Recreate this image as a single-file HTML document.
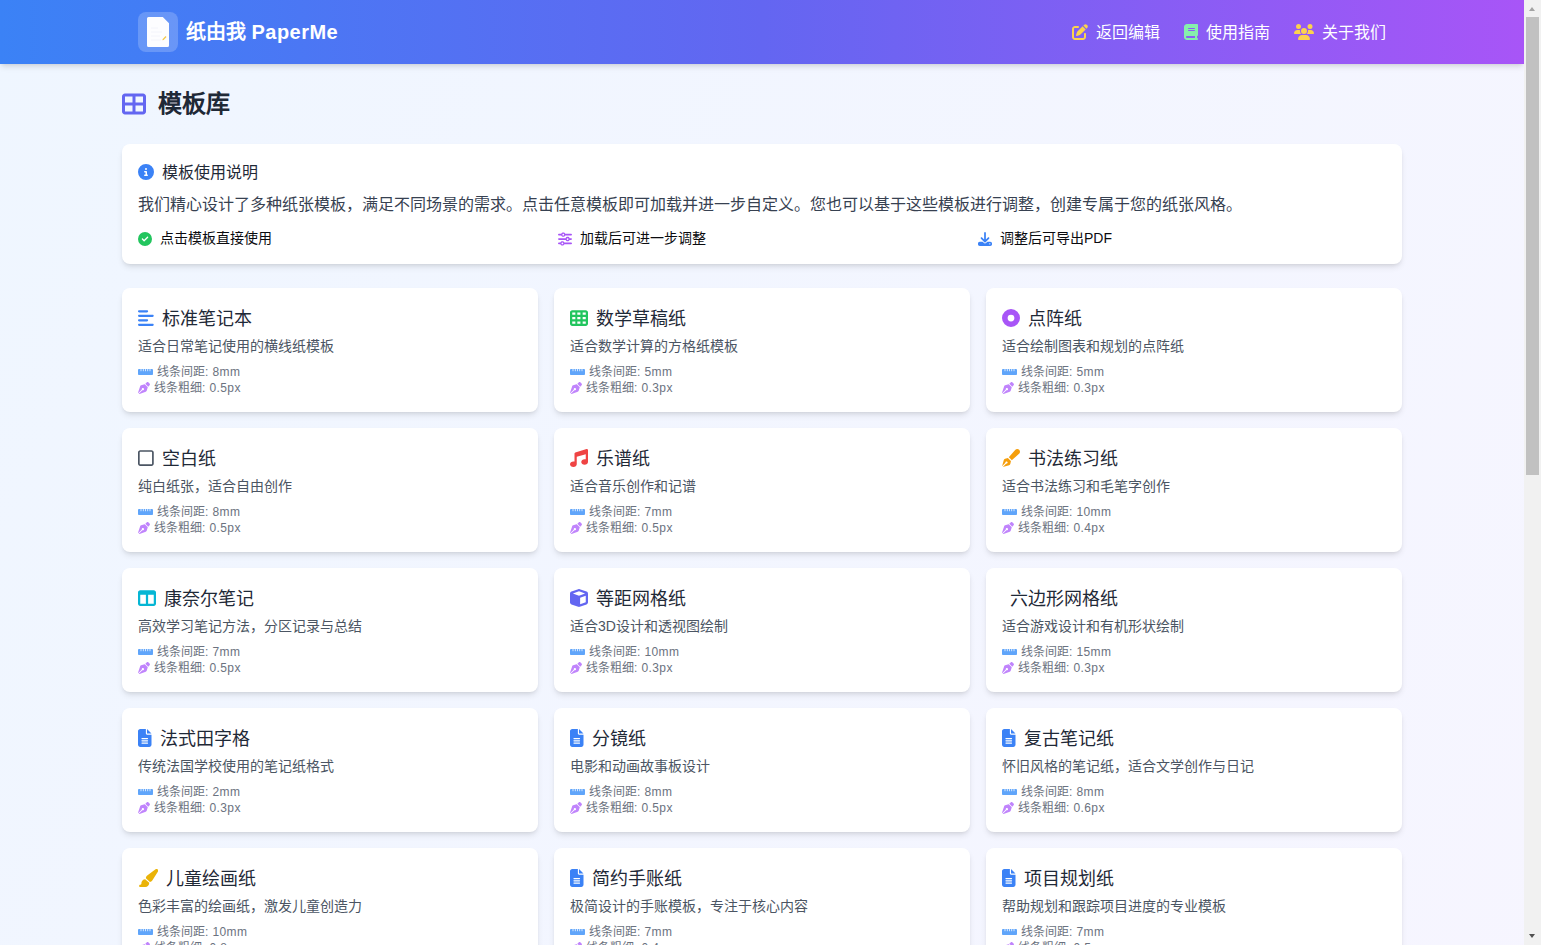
<!DOCTYPE html>
<html lang="zh-CN">
<head>
<meta charset="utf-8">
<title>模板库 - 纸由我 PaperMe</title>
<style>
*{box-sizing:border-box;margin:0;padding:0}
html,body{width:1541px;height:945px;overflow:hidden}
body{font-family:"Liberation Sans",sans-serif;color:#1f2937;position:relative;
background:#f5f5ff linear-gradient(to bottom right,#eff6ff,#faf5ff) 0 0/1524px 3000px no-repeat;}
svg{display:block;flex:none}
/* header */
#hdr{position:absolute;left:0;top:0;width:1524px;height:64px;
background:linear-gradient(90deg,#3b82f6 0%,#6366f1 50%,#a855f7 100%);
box-shadow:0 4px 6px -1px rgba(0,0,0,.1),0 2px 4px -2px rgba(0,0,0,.1);z-index:5}
#hdr .in{width:1280px;margin:0 auto;height:64px;padding:0 16px;display:flex;align-items:center;justify-content:space-between}
.brand{display:flex;align-items:center}
.logo{width:40px;height:40px;border-radius:8px;background:rgba(255,255,255,.2);display:flex;align-items:center;justify-content:center;margin-right:8px}
.brand b{font-size:20px;line-height:28px;color:#fff;font-weight:700}
.brand b span{letter-spacing:.45px}
.nav{display:flex;align-items:center}
.nav a{display:flex;align-items:center;color:#fff;font-size:16px;line-height:24px;margin-left:24px;text-decoration:none}
.nav a svg{margin-right:8px}
.nav a span{position:relative;top:1px}
/* main */
#main{position:absolute;left:122px;top:88px;width:1280px}
h1{display:flex;align-items:center;font-size:24px;line-height:32px;font-weight:700;color:#1f2937;margin-bottom:24px}
h1 svg{margin-right:12px}
.info{background:#fff;border-radius:8px;padding:16px;height:120px;margin-bottom:24px;
box-shadow:0 4px 6px -1px rgba(0,0,0,.1),0 2px 4px -2px rgba(0,0,0,.1)}
.info h2{display:flex;align-items:center;font-size:16px;line-height:24px;font-weight:400;color:#1f2937;margin-bottom:8px}
.info h2 svg{margin-right:8px}
.info h2 span{position:relative;top:1px}
.info p{font-size:16px;line-height:24px;color:#374151;position:relative;top:1px}
.tips{display:grid;grid-template-columns:repeat(3,408px);column-gap:12px;margin-top:12px}
.tips div{display:flex;align-items:center;font-size:14px;line-height:20px;color:#0b0b0f}
.tips svg{margin-right:8px;position:relative;top:.5px}
.grid{display:grid;grid-template-columns:repeat(3,416px);gap:16px}
.card{background:#fff;border-radius:8px;padding:16px;height:124px;
box-shadow:0 4px 6px -1px rgba(0,0,0,.1),0 2px 4px -2px rgba(0,0,0,.1)}
.card h3{display:flex;align-items:center;font-size:18px;line-height:28px;font-weight:400;color:#1f2937;margin-bottom:4px}
.card h3 svg{margin-right:8px}
.card h3 i{display:block;width:0;margin-right:8px}
.card h3 span{position:relative;top:1px}
.card p{font-size:14px;line-height:20px;color:#4b5563}
.sp{margin-top:8px;font-size:12px;line-height:16px;color:#6b7280}
.sp div{display:flex;align-items:center;height:16px}
.sp svg{margin-right:4px}
.sp span{letter-spacing:.4px}
/* scrollbar */
#sb{position:absolute;left:1524px;top:0;width:17px;height:945px;background:#f1f1f1;z-index:9}
#sb .th{position:absolute;left:2px;top:17px;width:13px;height:458px;background:#c1c1c1}
#sb .up{position:absolute;left:5px;top:7px;width:0;height:0;border-left:3.5px solid transparent;border-right:3.5px solid transparent;border-bottom:4px solid #a3a3a3}
#sb .dn{position:absolute;left:5px;top:934px;width:0;height:0;border-left:3.5px solid transparent;border-right:3.5px solid transparent;border-top:4px solid #505050}
</style>
</head>
<body>
<div id="hdr"><div class="in">
  <div class="brand"><div class="logo"><svg width="40" height="40" viewBox="0 0 40 40"><path d="M10.500 5h14.300l6.200 6.200V33.500a1.500 1.500 0 0 1-1.500 1.500h-19a1.500 1.500 0 0 1-1.500-1.500v-27A1.500 1.500 0 0 1 10.500 5z" fill="#fdfdff"/><path d="M13 16h7M13 20h11M13 24h9M13 28h10" stroke="#f3f4fb" stroke-width="1" fill="none"/><path d="M24.700 27l2.900-2.900.9.900-2.900 2.900-1.200.3z" fill="#f2c94c"/></svg></div><b>纸由我 <span>PaperMe</span></b></div>
  <div class="nav">
    <a><svg width="16.0" height="16" viewBox="0 0 512 512" fill="#fcd34d"><path d="M471.600 21.700c-21.900-21.900-57.300-21.900-79.200 0L362.300 51.700l97.900 97.900 30.100-30.100c21.900-21.900 21.900-57.300 0-79.200L471.600 21.700zm-299.200 220c-6.100 6.100-10.800 13.600-13.500 21.900l-29.600 88.800c-2.900 8.600-.6 18.100 5.800 24.600s15.900 8.700 24.600 5.800l88.800-29.600c8.200-2.700 15.700-7.400 21.900-13.500L437.700 172.300 339.700 74.300 172.400 241.700zM96 64C43 64 0 107 0 160V416c0 53 43 96 96 96H352c53 0 96-43 96-96V320c0-17.700-14.300-32-32-32s-32 14.300-32 32v96c0 17.700-14.300 32-32 32H96c-17.700 0-32-14.300-32-32V160c0-17.700 14.300-32 32-32h96c17.700 0 32-14.300 32-32s-14.300-32-32-32H96z"/></svg><span>返回编辑</span></a>
    <a><svg width="14.0" height="16" viewBox="0 0 448 512" fill="#86efac"><path d="M96 0C43 0 0 43 0 96V416c0 53 43 96 96 96H384h32c17.700 0 32-14.300 32-32s-14.300-32-32-32V384c17.700 0 32-14.300 32-32V32c0-17.700-14.300-32-32-32H384 96zm0 384H352v64H96c-17.700 0-32-14.300-32-32s14.300-32 32-32zm32-240c0-8.800 7.200-16 16-16H336c8.800 0 16 7.200 16 16s-7.200 16-16 16H144c-8.800 0-16-7.200-16-16zm16 48H336c8.800 0 16 7.200 16 16s-7.200 16-16 16H144c-8.800 0-16-7.200-16-16s7.200-16 16-16z"/></svg><span>使用指南</span></a>
    <a><svg width="20.0" height="16" viewBox="0 0 640 512" fill="#fcd34d"><path d="M144 0a80 80 0 1 1 0 160A80 80 0 1 1 144 0zM512 0a80 80 0 1 1 0 160A80 80 0 1 1 512 0zM0 298.700C0 239.800 47.800 192 106.700 192h42.700c15.900 0 31 3.500 44.600 9.700c-1.300 7.200-1.900 14.700-1.900 22.300c0 38.200 16.800 72.500 43.300 96c-.2 0-.4 0-.7 0H21.300C9.600 320 0 310.400 0 298.700zM405.300 320c-.2 0-.4 0-.7 0c26.600-23.500 43.300-57.800 43.300-96c0-7.600-.7-15-1.900-22.300c13.600-6.300 28.700-9.700 44.600-9.700h42.700C592.200 192 640 239.800 640 298.700c0 11.800-9.600 21.300-21.300 21.300H405.300zM224 224a96 96 0 1 1 192 0 96 96 0 1 1 -192 0zM128 485.300C128 411.700 187.700 352 261.300 352H378.700C452.300 352 512 411.700 512 485.300c0 14.700-11.900 26.700-26.700 26.700H154.700c-14.700 0-26.700-11.900-26.700-26.700z"/></svg><span>关于我们</span></a>
  </div>
</div></div>

<div id="main">
  <h1><svg width="24.0" height="24" viewBox="0 0 512 512" fill="#6366f1"><path d="M448 96V224H288V96H448zm0 192V416H288V288H448zM224 224H64V96H224V224zM64 288H224V416H64V288zM64 32C28.700 32 0 60.700 0 96V416c0 35.300 28.700 64 64 64H448c35.300 0 64-28.700 64-64V96c0-35.300-28.700-64-64-64H64z"/></svg>模板库</h1>
  <div class="info">
    <h2><svg width="16.0" height="16" viewBox="0 0 512 512" fill="#3b82f6"><path d="M256 512A256 256 0 1 0 256 0a256 256 0 1 0 0 512zM216 336h24V272H216c-13.300 0-24-10.700-24-24s10.700-24 24-24h48c13.300 0 24 10.700 24 24v88h8c13.300 0 24 10.700 24 24s-10.700 24-24 24H216c-13.300 0-24-10.700-24-24s10.700-24 24-24zm40-208a32 32 0 1 1 0 64 32 32 0 1 1 0-64z"/></svg><span>模板使用说明</span></h2>
    <p>我们精心设计了多种纸张模板，满足不同场景的需求。点击任意模板即可加载并进一步自定义。您也可以基于这些模板进行调整，创建专属于您的纸张风格。</p>
    <div class="tips">
      <div><svg width="14.0" height="14" viewBox="0 0 512 512" fill="#22c55e"><path d="M256 512A256 256 0 1 0 256 0a256 256 0 1 0 0 512zM369 209L241 337c-9.400 9.400-24.600 9.400-33.900 0l-64-64c-9.400-9.400-9.400-24.600 0-33.900s24.600-9.400 33.900 0l47 47L335 175c9.400-9.400 24.600-9.400 33.900 0s9.400 24.600 0 33.900z"/></svg>点击模板直接使用</div>
      <div><svg width="14.0" height="14" viewBox="0 0 512 512" fill="#a855f7"><path d="M0 416c0 17.700 14.300 32 32 32l54.700 0c12.300 28.300 40.500 48 73.300 48s61-19.700 73.300-48L480 448c17.700 0 32-14.300 32-32s-14.300-32-32-32l-246.700 0c-12.300-28.300-40.500-48-73.300-48s-61 19.700-73.300 48L32 384c-17.700 0-32 14.300-32 32zm128 0a32 32 0 1 1 64 0 32 32 0 1 1 -64 0zM320 256a32 32 0 1 1 64 0 32 32 0 1 1 -64 0zm32-80c-32.800 0-61 19.700-73.300 48L32 224c-17.700 0-32 14.300-32 32s14.300 32 32 32l246.700 0c12.300 28.300 40.500 48 73.300 48s61-19.700 73.300-48l54.700 0c17.700 0 32-14.300 32-32s-14.300-32-32-32l-54.700 0c-12.300-28.300-40.500-48-73.300-48zM192 128a32 32 0 1 1 0-64 32 32 0 1 1 0 64zm73.300-64C253 35.700 224.800 16 192 16s-61 19.700-73.300 48L32 64C14.300 64 0 78.300 0 96s14.300 32 32 32l86.700 0c12.300 28.300 40.500 48 73.300 48s61-19.700 73.300-48L480 128c17.700 0 32-14.300 32-32s-14.300-32-32-32L265.300 64z"/></svg>加载后可进一步调整</div>
      <div><svg width="14.0" height="14" viewBox="0 0 512 512" fill="#3b82f6"><path d="M288 32c0-17.700-14.300-32-32-32s-32 14.300-32 32V274.700l-73.400-73.400c-12.500-12.500-32.800-12.500-45.300 0s-12.500 32.800 0 45.300l128 128c12.500 12.500 32.800 12.500 45.300 0l128-128c12.500-12.500 12.500-32.800 0-45.300s-32.800-12.500-45.300 0L288 274.700V32zM64 352c-35.300 0-64 28.700-64 64v32c0 35.300 28.700 64 64 64H448c35.300 0 64-28.700 64-64V416c0-35.300-28.700-64-64-64H346.500l-45.300 45.300c-25 25-65.500 25-90.500 0L165.500 352H64zm368 56a24 24 0 1 1 0 48 24 24 0 1 1 0-48z"/></svg>调整后可导出PDF</div>
    </div>
  </div>
  <div class="grid">
<div class="card"><h3><svg width="15.75" height="18" viewBox="0 0 448 512" fill="#3b82f6"><path d="M288 64c0 17.700-14.300 32-32 32H32C14.300 96 0 81.700 0 64S14.300 32 32 32H256c17.700 0 32 14.300 32 32zm0 256c0 17.700-14.300 32-32 32H32c-17.700 0-32-14.300-32-32s14.300-32 32-32H256c17.700 0 32 14.300 32 32zM0 192c0-17.700 14.300-32 32-32H416c17.700 0 32 14.300 32 32s-14.300 32-32 32H32c-17.700 0-32-14.300-32-32zM448 448c0 17.700-14.300 32-32 32H32c-17.700 0-32-14.300-32-32s14.300-32 32-32H416c17.700 0 32 14.300 32 32z"/></svg><span>标准笔记本</span></h3><p>适合日常笔记使用的横线纸模板</p><div class="sp"><div><svg width="15.0" height="12" viewBox="0 0 640 512" fill="#60a5fa"><path d="M0 336c0 26.500 21.500 48 48 48l544 0c26.500 0 48-21.500 48-48l0-160c0-26.500-21.500-48-48-48l-64 0 0 80c0 8.800-7.200 16-16 16s-16-7.200-16-16l0-80-64 0 0 80c0 8.800-7.200 16-16 16s-16-7.200-16-16l0-80-64 0 0 80c0 8.800-7.200 16-16 16s-16-7.200-16-16l0-80-64 0 0 80c0 8.800-7.200 16-16 16s-16-7.200-16-16l0-80-64 0 0 80c0 8.800-7.200 16-16 16s-16-7.200-16-16l0-80-64 0c-26.500 0-48 21.500-48 48L0 336z"/></svg>线条间距<span>: 8mm</span></div><div><svg width="12.0" height="12" viewBox="0 0 512 512" fill="#c084fc"><path d="M368.400 18.300L312.700 74.100 437.900 199.300l55.700-55.700c21.900-21.900 21.900-57.300 0-79.200L447.600 18.300c-21.900-21.900-57.300-21.900-79.200 0zM288 94.600l-9.200 2.800L134.700 140.600c-19.900 6-35.700 21.200-42.300 41L3.800 445.800c-3.800 11.300-1 23.900 7.300 32.400L164.700 324.700c-3-6.300-4.700-13.300-4.700-20.700c0-26.500 21.500-48 48-48s48 21.500 48 48s-21.500 48-48 48c-7.400 0-14.400-1.700-20.700-4.700L33.700 500.900c8.600 8.300 21.100 11.200 32.400 7.300l264.300-88.600c19.700-6.600 35-22.400 41-42.300l43.200-144.100 2.800-9.200L288 94.600z"/></svg>线条粗细<span>: 0.5px</span></div></div></div>
<div class="card"><h3><svg width="18.0" height="18" viewBox="0 0 512 512" fill="#22c55e"><path d="M64 32C28.700 32 0 60.700 0 96V416c0 35.300 28.700 64 64 64H448c35.300 0 64-28.700 64-64V96c0-35.300-28.700-64-64-64H64zm88 64v64H64V96h88zm56 0h88v64H208V96zm240 0v64H360V96h88zM64 224h88v64H64V224zm232 0v64H208V224h88zm64 0h88v64H360V224zM152 352v64H64V352h88zm56 0h88v64H208V352zm240 0v64H360V352h88z"/></svg><span>数学草稿纸</span></h3><p>适合数学计算的方格纸模板</p><div class="sp"><div><svg width="15.0" height="12" viewBox="0 0 640 512" fill="#60a5fa"><path d="M0 336c0 26.500 21.500 48 48 48l544 0c26.500 0 48-21.500 48-48l0-160c0-26.500-21.500-48-48-48l-64 0 0 80c0 8.800-7.200 16-16 16s-16-7.200-16-16l0-80-64 0 0 80c0 8.800-7.200 16-16 16s-16-7.200-16-16l0-80-64 0 0 80c0 8.800-7.200 16-16 16s-16-7.200-16-16l0-80-64 0 0 80c0 8.800-7.200 16-16 16s-16-7.200-16-16l0-80-64 0 0 80c0 8.800-7.200 16-16 16s-16-7.200-16-16l0-80-64 0c-26.500 0-48 21.500-48 48L0 336z"/></svg>线条间距<span>: 5mm</span></div><div><svg width="12.0" height="12" viewBox="0 0 512 512" fill="#c084fc"><path d="M368.400 18.300L312.700 74.100 437.900 199.300l55.700-55.700c21.900-21.900 21.900-57.300 0-79.200L447.600 18.300c-21.900-21.900-57.300-21.900-79.200 0zM288 94.600l-9.200 2.800L134.700 140.600c-19.900 6-35.700 21.200-42.300 41L3.800 445.800c-3.800 11.300-1 23.900 7.300 32.400L164.700 324.700c-3-6.300-4.700-13.300-4.700-20.700c0-26.500 21.500-48 48-48s48 21.500 48 48s-21.500 48-48 48c-7.400 0-14.400-1.700-20.700-4.700L33.700 500.900c8.600 8.300 21.100 11.200 32.400 7.300l264.300-88.600c19.700-6.600 35-22.400 41-42.300l43.200-144.100 2.800-9.200L288 94.600z"/></svg>线条粗细<span>: 0.3px</span></div></div></div>
<div class="card"><h3><svg width="18.0" height="18" viewBox="0 0 512 512" fill="#a855f7"><path d="M256 512A256 256 0 1 0 256 0a256 256 0 1 0 0 512zm0-352a96 96 0 1 1 0 192 96 96 0 1 1 0-192z"/></svg><span>点阵纸</span></h3><p>适合绘制图表和规划的点阵纸</p><div class="sp"><div><svg width="15.0" height="12" viewBox="0 0 640 512" fill="#60a5fa"><path d="M0 336c0 26.500 21.500 48 48 48l544 0c26.500 0 48-21.500 48-48l0-160c0-26.500-21.500-48-48-48l-64 0 0 80c0 8.800-7.200 16-16 16s-16-7.200-16-16l0-80-64 0 0 80c0 8.800-7.200 16-16 16s-16-7.200-16-16l0-80-64 0 0 80c0 8.800-7.200 16-16 16s-16-7.200-16-16l0-80-64 0 0 80c0 8.800-7.200 16-16 16s-16-7.200-16-16l0-80-64 0 0 80c0 8.800-7.200 16-16 16s-16-7.200-16-16l0-80-64 0c-26.500 0-48 21.500-48 48L0 336z"/></svg>线条间距<span>: 5mm</span></div><div><svg width="12.0" height="12" viewBox="0 0 512 512" fill="#c084fc"><path d="M368.400 18.300L312.700 74.100 437.900 199.300l55.700-55.700c21.900-21.900 21.900-57.300 0-79.200L447.600 18.300c-21.900-21.900-57.300-21.900-79.200 0zM288 94.600l-9.200 2.800L134.700 140.600c-19.900 6-35.700 21.200-42.300 41L3.800 445.800c-3.800 11.300-1 23.900 7.300 32.400L164.700 324.700c-3-6.300-4.700-13.300-4.700-20.700c0-26.500 21.500-48 48-48s48 21.500 48 48s-21.500 48-48 48c-7.400 0-14.400-1.700-20.700-4.700L33.700 500.900c8.600 8.300 21.100 11.200 32.400 7.300l264.300-88.600c19.700-6.600 35-22.400 41-42.300l43.200-144.100 2.800-9.200L288 94.600z"/></svg>线条粗细<span>: 0.3px</span></div></div></div>
<div class="card"><h3><svg width="15.75" height="18" viewBox="0 0 448 512" fill="#4b5563"><path d="M384 80c8.800 0 16 7.200 16 16V416c0 8.800-7.200 16-16 16H64c-8.800 0-16-7.200-16-16V96c0-8.800 7.200-16 16-16H384zM64 32C28.700 32 0 60.700 0 96V416c0 35.300 28.700 64 64 64H384c35.300 0 64-28.700 64-64V96c0-35.300-28.700-64-64-64H64z"/></svg><span>空白纸</span></h3><p>纯白纸张，适合自由创作</p><div class="sp"><div><svg width="15.0" height="12" viewBox="0 0 640 512" fill="#60a5fa"><path d="M0 336c0 26.500 21.500 48 48 48l544 0c26.500 0 48-21.500 48-48l0-160c0-26.500-21.500-48-48-48l-64 0 0 80c0 8.800-7.200 16-16 16s-16-7.200-16-16l0-80-64 0 0 80c0 8.800-7.200 16-16 16s-16-7.200-16-16l0-80-64 0 0 80c0 8.800-7.200 16-16 16s-16-7.200-16-16l0-80-64 0 0 80c0 8.800-7.200 16-16 16s-16-7.200-16-16l0-80-64 0 0 80c0 8.800-7.200 16-16 16s-16-7.200-16-16l0-80-64 0c-26.500 0-48 21.500-48 48L0 336z"/></svg>线条间距<span>: 8mm</span></div><div><svg width="12.0" height="12" viewBox="0 0 512 512" fill="#c084fc"><path d="M368.400 18.300L312.700 74.100 437.900 199.300l55.700-55.700c21.900-21.900 21.900-57.300 0-79.200L447.600 18.300c-21.900-21.900-57.300-21.900-79.200 0zM288 94.600l-9.200 2.800L134.700 140.600c-19.900 6-35.700 21.200-42.300 41L3.800 445.800c-3.800 11.300-1 23.900 7.300 32.400L164.700 324.700c-3-6.300-4.700-13.300-4.700-20.700c0-26.500 21.500-48 48-48s48 21.500 48 48s-21.500 48-48 48c-7.400 0-14.400-1.700-20.700-4.700L33.700 500.900c8.600 8.300 21.100 11.200 32.400 7.300l264.300-88.600c19.700-6.600 35-22.400 41-42.300l43.200-144.100 2.800-9.200L288 94.600z"/></svg>线条粗细<span>: 0.5px</span></div></div></div>
<div class="card"><h3><svg width="18.0" height="18" viewBox="0 0 512 512" fill="#ef4444"><path d="M499.1 6.3c8.100 6 12.900 15.600 12.900 25.700v72V368c0 44.200-43 80-96 80s-96-35.800-96-80s43-80 96-80c11.200 0 22 1.600 32 4.500V147L192 223.800V432c0 44.200-43 80-96 80s-96-35.800-96-80s43-80 96-80c11.200 0 22 1.600 32 4.500V200 128c0-14.100 9.300-26.600 22.800-30.700l320-96c9.700-2.900 20.200-1.100 28.300 5z"/></svg><span>乐谱纸</span></h3><p>适合音乐创作和记谱</p><div class="sp"><div><svg width="15.0" height="12" viewBox="0 0 640 512" fill="#60a5fa"><path d="M0 336c0 26.500 21.500 48 48 48l544 0c26.500 0 48-21.500 48-48l0-160c0-26.500-21.500-48-48-48l-64 0 0 80c0 8.800-7.200 16-16 16s-16-7.200-16-16l0-80-64 0 0 80c0 8.800-7.200 16-16 16s-16-7.200-16-16l0-80-64 0 0 80c0 8.800-7.200 16-16 16s-16-7.200-16-16l0-80-64 0 0 80c0 8.800-7.200 16-16 16s-16-7.200-16-16l0-80-64 0 0 80c0 8.800-7.200 16-16 16s-16-7.200-16-16l0-80-64 0c-26.500 0-48 21.500-48 48L0 336z"/></svg>线条间距<span>: 7mm</span></div><div><svg width="12.0" height="12" viewBox="0 0 512 512" fill="#c084fc"><path d="M368.400 18.300L312.700 74.100 437.900 199.300l55.700-55.700c21.900-21.900 21.900-57.300 0-79.200L447.600 18.300c-21.900-21.900-57.300-21.900-79.200 0zM288 94.600l-9.200 2.800L134.700 140.600c-19.900 6-35.700 21.200-42.300 41L3.800 445.800c-3.800 11.300-1 23.900 7.300 32.400L164.700 324.700c-3-6.300-4.700-13.300-4.700-20.700c0-26.500 21.500-48 48-48s48 21.500 48 48s-21.500 48-48 48c-7.400 0-14.400-1.700-20.700-4.700L33.700 500.900c8.600 8.300 21.100 11.200 32.400 7.300l264.300-88.600c19.700-6.600 35-22.400 41-42.300l43.200-144.100 2.800-9.200L288 94.600z"/></svg>线条粗细<span>: 0.5px</span></div></div></div>
<div class="card"><h3><svg width="18.0" height="18" viewBox="0 0 512 512" fill="#f59e0b"><path d="M373.500 27.100C388.500 9.900 410.200 0 433 0c43.600 0 79 35.400 79 79c0 22.800-9.900 44.600-27.100 59.600L277.700 319l-10.300-10.300-64-64L193 234.300 373.500 27.100zM170.300 256.900l10.400 10.400 64 64 10.400 10.400-19.200 83.400c-3.900 17.100-16.900 30.700-33.800 35.400L24.400 510.300l95.400-95.400c2.600 .7 5.400 1.100 8.300 1.100c17.700 0 32-14.300 32-32s-14.300-32-32-32s-32 14.300-32 32c0 2.900 .4 5.600 1.100 8.300L1.700 487.600 51.500 310c4.700-16.900 18.300-29.900 35.400-33.800l83.400-19.200z"/></svg><span>书法练习纸</span></h3><p>适合书法练习和毛笔字创作</p><div class="sp"><div><svg width="15.0" height="12" viewBox="0 0 640 512" fill="#60a5fa"><path d="M0 336c0 26.500 21.500 48 48 48l544 0c26.500 0 48-21.500 48-48l0-160c0-26.500-21.500-48-48-48l-64 0 0 80c0 8.800-7.200 16-16 16s-16-7.200-16-16l0-80-64 0 0 80c0 8.800-7.200 16-16 16s-16-7.200-16-16l0-80-64 0 0 80c0 8.800-7.200 16-16 16s-16-7.200-16-16l0-80-64 0 0 80c0 8.800-7.200 16-16 16s-16-7.200-16-16l0-80-64 0 0 80c0 8.800-7.200 16-16 16s-16-7.200-16-16l0-80-64 0c-26.500 0-48 21.500-48 48L0 336z"/></svg>线条间距<span>: 10mm</span></div><div><svg width="12.0" height="12" viewBox="0 0 512 512" fill="#c084fc"><path d="M368.400 18.300L312.700 74.100 437.900 199.300l55.700-55.700c21.900-21.900 21.900-57.300 0-79.200L447.600 18.300c-21.900-21.900-57.300-21.900-79.200 0zM288 94.600l-9.200 2.800L134.700 140.600c-19.900 6-35.700 21.200-42.300 41L3.800 445.800c-3.800 11.300-1 23.900 7.300 32.400L164.700 324.700c-3-6.300-4.700-13.300-4.700-20.700c0-26.500 21.500-48 48-48s48 21.500 48 48s-21.500 48-48 48c-7.400 0-14.400-1.700-20.700-4.700L33.700 500.900c8.600 8.300 21.100 11.200 32.400 7.300l264.300-88.600c19.700-6.600 35-22.400 41-42.300l43.200-144.100 2.800-9.200L288 94.600z"/></svg>线条粗细<span>: 0.4px</span></div></div></div>
<div class="card"><h3><svg width="18.0" height="18" viewBox="0 0 512 512" fill="#06b6d4"><path d="M0 96C0 60.700 28.700 32 64 32H448c35.300 0 64 28.700 64 64V416c0 35.300-28.700 64-64 64H64c-35.300 0-64-28.700-64-64V96zm64 64V416H224V160H64zm384 0H288V416H448V160z"/></svg><span>康奈尔笔记</span></h3><p>高效学习笔记方法，分区记录与总结</p><div class="sp"><div><svg width="15.0" height="12" viewBox="0 0 640 512" fill="#60a5fa"><path d="M0 336c0 26.500 21.500 48 48 48l544 0c26.500 0 48-21.500 48-48l0-160c0-26.500-21.500-48-48-48l-64 0 0 80c0 8.800-7.200 16-16 16s-16-7.200-16-16l0-80-64 0 0 80c0 8.800-7.200 16-16 16s-16-7.200-16-16l0-80-64 0 0 80c0 8.800-7.200 16-16 16s-16-7.200-16-16l0-80-64 0 0 80c0 8.800-7.200 16-16 16s-16-7.200-16-16l0-80-64 0 0 80c0 8.800-7.200 16-16 16s-16-7.200-16-16l0-80-64 0c-26.500 0-48 21.500-48 48L0 336z"/></svg>线条间距<span>: 7mm</span></div><div><svg width="12.0" height="12" viewBox="0 0 512 512" fill="#c084fc"><path d="M368.400 18.300L312.700 74.100 437.900 199.300l55.700-55.700c21.900-21.900 21.900-57.300 0-79.200L447.600 18.300c-21.900-21.900-57.300-21.900-79.200 0zM288 94.600l-9.200 2.800L134.700 140.600c-19.900 6-35.700 21.200-42.300 41L3.800 445.800c-3.800 11.300-1 23.900 7.300 32.400L164.700 324.700c-3-6.300-4.700-13.300-4.700-20.700c0-26.500 21.500-48 48-48s48 21.500 48 48s-21.500 48-48 48c-7.400 0-14.400-1.700-20.700-4.700L33.700 500.900c8.600 8.300 21.100 11.200 32.400 7.300l264.300-88.600c19.700-6.600 35-22.400 41-42.300l43.200-144.100 2.800-9.200L288 94.600z"/></svg>线条粗细<span>: 0.5px</span></div></div></div>
<div class="card"><h3><svg width="18.0" height="18" viewBox="0 0 512 512" fill="#6366f1"><path d="M234.500 5.700c13.900-5 29.100-5 43.100 0l192 68.600C495 83.400 512 107.500 512 134.600V377.400c0 27-17 51.200-42.500 60.300l-192 68.600c-13.900 5-29.100 5-43.100 0l-192-68.600C17 428.600 0 404.500 0 377.400V134.600c0-27 17-51.200 42.500-60.300l192-68.600zM256 66L82.300 128 256 190l173.700-62L256 66zm32 368.600l160-57.100v-188L288 246.600v188z"/></svg><span>等距网格纸</span></h3><p>适合3D设计和透视图绘制</p><div class="sp"><div><svg width="15.0" height="12" viewBox="0 0 640 512" fill="#60a5fa"><path d="M0 336c0 26.500 21.500 48 48 48l544 0c26.500 0 48-21.500 48-48l0-160c0-26.500-21.500-48-48-48l-64 0 0 80c0 8.800-7.200 16-16 16s-16-7.200-16-16l0-80-64 0 0 80c0 8.800-7.200 16-16 16s-16-7.200-16-16l0-80-64 0 0 80c0 8.800-7.200 16-16 16s-16-7.200-16-16l0-80-64 0 0 80c0 8.800-7.200 16-16 16s-16-7.200-16-16l0-80-64 0 0 80c0 8.800-7.200 16-16 16s-16-7.200-16-16l0-80-64 0c-26.500 0-48 21.500-48 48L0 336z"/></svg>线条间距<span>: 10mm</span></div><div><svg width="12.0" height="12" viewBox="0 0 512 512" fill="#c084fc"><path d="M368.400 18.300L312.700 74.100 437.900 199.300l55.700-55.700c21.900-21.900 21.900-57.300 0-79.200L447.600 18.300c-21.900-21.900-57.300-21.900-79.200 0zM288 94.600l-9.200 2.800L134.700 140.600c-19.900 6-35.700 21.200-42.300 41L3.800 445.800c-3.800 11.300-1 23.900 7.300 32.400L164.700 324.700c-3-6.300-4.700-13.300-4.700-20.700c0-26.500 21.500-48 48-48s48 21.500 48 48s-21.500 48-48 48c-7.400 0-14.400-1.700-20.700-4.700L33.700 500.900c8.600 8.300 21.100 11.200 32.400 7.300l264.300-88.600c19.700-6.600 35-22.400 41-42.300l43.200-144.100 2.800-9.200L288 94.600z"/></svg>线条粗细<span>: 0.3px</span></div></div></div>
<div class="card"><h3><i></i><span>六边形网格纸</span></h3><p>适合游戏设计和有机形状绘制</p><div class="sp"><div><svg width="15.0" height="12" viewBox="0 0 640 512" fill="#60a5fa"><path d="M0 336c0 26.500 21.500 48 48 48l544 0c26.500 0 48-21.500 48-48l0-160c0-26.500-21.500-48-48-48l-64 0 0 80c0 8.800-7.200 16-16 16s-16-7.200-16-16l0-80-64 0 0 80c0 8.800-7.200 16-16 16s-16-7.200-16-16l0-80-64 0 0 80c0 8.800-7.200 16-16 16s-16-7.200-16-16l0-80-64 0 0 80c0 8.800-7.200 16-16 16s-16-7.200-16-16l0-80-64 0 0 80c0 8.800-7.200 16-16 16s-16-7.200-16-16l0-80-64 0c-26.500 0-48 21.500-48 48L0 336z"/></svg>线条间距<span>: 15mm</span></div><div><svg width="12.0" height="12" viewBox="0 0 512 512" fill="#c084fc"><path d="M368.400 18.300L312.700 74.100 437.900 199.300l55.700-55.700c21.900-21.900 21.900-57.300 0-79.200L447.600 18.300c-21.900-21.900-57.300-21.900-79.200 0zM288 94.600l-9.200 2.800L134.700 140.600c-19.900 6-35.700 21.200-42.300 41L3.800 445.800c-3.800 11.300-1 23.900 7.300 32.400L164.700 324.700c-3-6.300-4.700-13.300-4.700-20.700c0-26.500 21.500-48 48-48s48 21.500 48 48s-21.500 48-48 48c-7.400 0-14.400-1.700-20.700-4.700L33.700 500.900c8.600 8.300 21.100 11.200 32.400 7.300l264.300-88.600c19.700-6.600 35-22.400 41-42.300l43.200-144.100 2.800-9.200L288 94.600z"/></svg>线条粗细<span>: 0.3px</span></div></div></div>
<div class="card"><h3><svg width="13.5" height="18" viewBox="0 0 384 512" fill="#3b82f6"><path d="M64 0C28.700 0 0 28.700 0 64V448c0 35.300 28.700 64 64 64H320c35.300 0 64-28.700 64-64V160H256c-17.700 0-32-14.300-32-32V0H64zM256 0V128H384L256 0zM112 256H272c8.800 0 16 7.200 16 16s-7.200 16-16 16H112c-8.800 0-16-7.200-16-16s7.200-16 16-16zm0 64H272c8.800 0 16 7.200 16 16s-7.200 16-16 16H112c-8.800 0-16-7.200-16-16s7.200-16 16-16zm0 64H272c8.800 0 16 7.200 16 16s-7.200 16-16 16H112c-8.800 0-16-7.200-16-16s7.200-16 16-16z"/></svg><span>法式田字格</span></h3><p>传统法国学校使用的笔记纸格式</p><div class="sp"><div><svg width="15.0" height="12" viewBox="0 0 640 512" fill="#60a5fa"><path d="M0 336c0 26.500 21.500 48 48 48l544 0c26.500 0 48-21.500 48-48l0-160c0-26.500-21.500-48-48-48l-64 0 0 80c0 8.800-7.200 16-16 16s-16-7.200-16-16l0-80-64 0 0 80c0 8.800-7.200 16-16 16s-16-7.200-16-16l0-80-64 0 0 80c0 8.800-7.200 16-16 16s-16-7.200-16-16l0-80-64 0 0 80c0 8.800-7.200 16-16 16s-16-7.200-16-16l0-80-64 0 0 80c0 8.800-7.200 16-16 16s-16-7.200-16-16l0-80-64 0c-26.500 0-48 21.500-48 48L0 336z"/></svg>线条间距<span>: 2mm</span></div><div><svg width="12.0" height="12" viewBox="0 0 512 512" fill="#c084fc"><path d="M368.400 18.300L312.700 74.100 437.900 199.300l55.700-55.700c21.900-21.900 21.900-57.300 0-79.200L447.600 18.300c-21.900-21.900-57.300-21.900-79.200 0zM288 94.600l-9.200 2.800L134.700 140.600c-19.900 6-35.700 21.200-42.300 41L3.800 445.800c-3.800 11.300-1 23.900 7.300 32.400L164.700 324.700c-3-6.300-4.700-13.300-4.700-20.700c0-26.500 21.500-48 48-48s48 21.500 48 48s-21.500 48-48 48c-7.400 0-14.400-1.700-20.700-4.700L33.700 500.900c8.600 8.300 21.100 11.200 32.400 7.300l264.300-88.600c19.700-6.600 35-22.400 41-42.300l43.200-144.100 2.800-9.200L288 94.600z"/></svg>线条粗细<span>: 0.3px</span></div></div></div>
<div class="card"><h3><svg width="13.5" height="18" viewBox="0 0 384 512" fill="#3b82f6"><path d="M64 0C28.700 0 0 28.700 0 64V448c0 35.300 28.700 64 64 64H320c35.300 0 64-28.700 64-64V160H256c-17.700 0-32-14.300-32-32V0H64zM256 0V128H384L256 0zM112 256H272c8.800 0 16 7.200 16 16s-7.200 16-16 16H112c-8.800 0-16-7.200-16-16s7.200-16 16-16zm0 64H272c8.800 0 16 7.200 16 16s-7.200 16-16 16H112c-8.800 0-16-7.200-16-16s7.200-16 16-16zm0 64H272c8.800 0 16 7.200 16 16s-7.200 16-16 16H112c-8.800 0-16-7.200-16-16s7.200-16 16-16z"/></svg><span>分镜纸</span></h3><p>电影和动画故事板设计</p><div class="sp"><div><svg width="15.0" height="12" viewBox="0 0 640 512" fill="#60a5fa"><path d="M0 336c0 26.500 21.500 48 48 48l544 0c26.500 0 48-21.500 48-48l0-160c0-26.500-21.500-48-48-48l-64 0 0 80c0 8.800-7.200 16-16 16s-16-7.200-16-16l0-80-64 0 0 80c0 8.800-7.200 16-16 16s-16-7.200-16-16l0-80-64 0 0 80c0 8.800-7.200 16-16 16s-16-7.200-16-16l0-80-64 0 0 80c0 8.800-7.200 16-16 16s-16-7.200-16-16l0-80-64 0 0 80c0 8.800-7.200 16-16 16s-16-7.200-16-16l0-80-64 0c-26.500 0-48 21.500-48 48L0 336z"/></svg>线条间距<span>: 8mm</span></div><div><svg width="12.0" height="12" viewBox="0 0 512 512" fill="#c084fc"><path d="M368.400 18.300L312.700 74.100 437.900 199.300l55.700-55.700c21.900-21.900 21.900-57.300 0-79.200L447.600 18.300c-21.900-21.900-57.300-21.900-79.200 0zM288 94.600l-9.200 2.800L134.700 140.600c-19.900 6-35.700 21.200-42.300 41L3.800 445.800c-3.800 11.300-1 23.900 7.300 32.400L164.700 324.700c-3-6.300-4.700-13.300-4.700-20.700c0-26.500 21.500-48 48-48s48 21.500 48 48s-21.500 48-48 48c-7.400 0-14.400-1.700-20.700-4.700L33.700 500.900c8.600 8.300 21.100 11.200 32.400 7.300l264.300-88.600c19.700-6.600 35-22.400 41-42.300l43.200-144.100 2.800-9.200L288 94.600z"/></svg>线条粗细<span>: 0.5px</span></div></div></div>
<div class="card"><h3><svg width="13.5" height="18" viewBox="0 0 384 512" fill="#3b82f6"><path d="M64 0C28.700 0 0 28.700 0 64V448c0 35.300 28.700 64 64 64H320c35.300 0 64-28.700 64-64V160H256c-17.700 0-32-14.300-32-32V0H64zM256 0V128H384L256 0zM112 256H272c8.800 0 16 7.200 16 16s-7.200 16-16 16H112c-8.800 0-16-7.200-16-16s7.200-16 16-16zm0 64H272c8.800 0 16 7.200 16 16s-7.200 16-16 16H112c-8.800 0-16-7.200-16-16s7.200-16 16-16zm0 64H272c8.800 0 16 7.200 16 16s-7.200 16-16 16H112c-8.800 0-16-7.200-16-16s7.200-16 16-16z"/></svg><span>复古笔记纸</span></h3><p>怀旧风格的笔记纸，适合文学创作与日记</p><div class="sp"><div><svg width="15.0" height="12" viewBox="0 0 640 512" fill="#60a5fa"><path d="M0 336c0 26.500 21.500 48 48 48l544 0c26.500 0 48-21.500 48-48l0-160c0-26.500-21.500-48-48-48l-64 0 0 80c0 8.800-7.200 16-16 16s-16-7.200-16-16l0-80-64 0 0 80c0 8.800-7.200 16-16 16s-16-7.200-16-16l0-80-64 0 0 80c0 8.800-7.200 16-16 16s-16-7.200-16-16l0-80-64 0 0 80c0 8.800-7.200 16-16 16s-16-7.200-16-16l0-80-64 0 0 80c0 8.800-7.200 16-16 16s-16-7.200-16-16l0-80-64 0c-26.500 0-48 21.500-48 48L0 336z"/></svg>线条间距<span>: 8mm</span></div><div><svg width="12.0" height="12" viewBox="0 0 512 512" fill="#c084fc"><path d="M368.400 18.300L312.700 74.100 437.900 199.300l55.700-55.700c21.900-21.900 21.900-57.300 0-79.200L447.600 18.300c-21.900-21.900-57.300-21.900-79.200 0zM288 94.600l-9.200 2.800L134.700 140.600c-19.900 6-35.700 21.200-42.300 41L3.800 445.800c-3.800 11.300-1 23.900 7.300 32.400L164.700 324.700c-3-6.300-4.700-13.300-4.700-20.700c0-26.500 21.500-48 48-48s48 21.500 48 48s-21.500 48-48 48c-7.400 0-14.400-1.700-20.700-4.700L33.700 500.900c8.600 8.300 21.100 11.200 32.400 7.300l264.300-88.600c19.700-6.600 35-22.400 41-42.300l43.200-144.100 2.800-9.200L288 94.600z"/></svg>线条粗细<span>: 0.6px</span></div></div></div>
<div class="card"><h3><svg width="20.25" height="18" viewBox="0 0 576 512" fill="#eab308"><path d="M339.300 367.100c27.300-3.900 51.900-19.400 67.200-42.900L568.200 74.100c12.600-19.500 9.400-45.300-7.600-61.200S517.700-4.400 499.100 9.600L262.400 187.200c-24 18-38.200 46.100-38.400 76.100L339.300 367.100zm-19.600 25.400l-116-104.400C143.900 290.300 96 339.600 96 400c0 3.900 .2 7.800 .6 11.600C98.400 429.100 86.400 448 68.800 448H64c-17.700 0-32 14.300-32 32s14.300 32 32 32H208c61.900 0 112-50.100 112-112c0-2.500-.1-5-.2-7.500z"/></svg><span>儿童绘画纸</span></h3><p>色彩丰富的绘画纸，激发儿童创造力</p><div class="sp"><div><svg width="15.0" height="12" viewBox="0 0 640 512" fill="#60a5fa"><path d="M0 336c0 26.500 21.500 48 48 48l544 0c26.500 0 48-21.500 48-48l0-160c0-26.500-21.500-48-48-48l-64 0 0 80c0 8.800-7.200 16-16 16s-16-7.200-16-16l0-80-64 0 0 80c0 8.800-7.200 16-16 16s-16-7.200-16-16l0-80-64 0 0 80c0 8.800-7.200 16-16 16s-16-7.200-16-16l0-80-64 0 0 80c0 8.800-7.200 16-16 16s-16-7.200-16-16l0-80-64 0 0 80c0 8.800-7.200 16-16 16s-16-7.200-16-16l0-80-64 0c-26.500 0-48 21.500-48 48L0 336z"/></svg>线条间距<span>: 10mm</span></div><div><svg width="12.0" height="12" viewBox="0 0 512 512" fill="#c084fc"><path d="M368.400 18.300L312.700 74.100 437.900 199.300l55.700-55.700c21.900-21.900 21.900-57.300 0-79.200L447.600 18.300c-21.900-21.900-57.300-21.900-79.200 0zM288 94.600l-9.200 2.800L134.700 140.600c-19.900 6-35.700 21.200-42.300 41L3.800 445.800c-3.800 11.300-1 23.900 7.300 32.400L164.700 324.700c-3-6.300-4.700-13.300-4.700-20.700c0-26.500 21.500-48 48-48s48 21.500 48 48s-21.500 48-48 48c-7.400 0-14.400-1.700-20.700-4.700L33.700 500.900c8.600 8.300 21.100 11.200 32.400 7.300l264.300-88.600c19.700-6.600 35-22.400 41-42.300l43.200-144.100 2.800-9.200L288 94.600z"/></svg>线条粗细<span>: 0.8px</span></div></div></div>
<div class="card"><h3><svg width="13.5" height="18" viewBox="0 0 384 512" fill="#3b82f6"><path d="M64 0C28.700 0 0 28.700 0 64V448c0 35.300 28.700 64 64 64H320c35.300 0 64-28.700 64-64V160H256c-17.700 0-32-14.300-32-32V0H64zM256 0V128H384L256 0zM112 256H272c8.800 0 16 7.200 16 16s-7.200 16-16 16H112c-8.800 0-16-7.200-16-16s7.200-16 16-16zm0 64H272c8.800 0 16 7.200 16 16s-7.200 16-16 16H112c-8.800 0-16-7.200-16-16s7.200-16 16-16zm0 64H272c8.800 0 16 7.200 16 16s-7.200 16-16 16H112c-8.800 0-16-7.200-16-16s7.200-16 16-16z"/></svg><span>简约手账纸</span></h3><p>极简设计的手账模板，专注于核心内容</p><div class="sp"><div><svg width="15.0" height="12" viewBox="0 0 640 512" fill="#60a5fa"><path d="M0 336c0 26.500 21.500 48 48 48l544 0c26.500 0 48-21.500 48-48l0-160c0-26.500-21.500-48-48-48l-64 0 0 80c0 8.800-7.200 16-16 16s-16-7.200-16-16l0-80-64 0 0 80c0 8.800-7.200 16-16 16s-16-7.200-16-16l0-80-64 0 0 80c0 8.800-7.200 16-16 16s-16-7.200-16-16l0-80-64 0 0 80c0 8.800-7.200 16-16 16s-16-7.200-16-16l0-80-64 0 0 80c0 8.800-7.200 16-16 16s-16-7.200-16-16l0-80-64 0c-26.500 0-48 21.500-48 48L0 336z"/></svg>线条间距<span>: 7mm</span></div><div><svg width="12.0" height="12" viewBox="0 0 512 512" fill="#c084fc"><path d="M368.400 18.300L312.700 74.100 437.900 199.300l55.700-55.700c21.900-21.900 21.900-57.300 0-79.200L447.600 18.300c-21.900-21.900-57.300-21.900-79.200 0zM288 94.600l-9.200 2.800L134.700 140.600c-19.900 6-35.700 21.200-42.300 41L3.800 445.800c-3.800 11.300-1 23.900 7.300 32.400L164.700 324.700c-3-6.300-4.700-13.300-4.700-20.700c0-26.500 21.500-48 48-48s48 21.500 48 48s-21.500 48-48 48c-7.400 0-14.400-1.700-20.700-4.700L33.700 500.900c8.600 8.300 21.100 11.200 32.400 7.300l264.300-88.600c19.700-6.600 35-22.400 41-42.300l43.200-144.100 2.800-9.200L288 94.600z"/></svg>线条粗细<span>: 0.4px</span></div></div></div>
<div class="card"><h3><svg width="13.5" height="18" viewBox="0 0 384 512" fill="#3b82f6"><path d="M64 0C28.700 0 0 28.700 0 64V448c0 35.300 28.700 64 64 64H320c35.300 0 64-28.700 64-64V160H256c-17.700 0-32-14.300-32-32V0H64zM256 0V128H384L256 0zM112 256H272c8.800 0 16 7.200 16 16s-7.200 16-16 16H112c-8.800 0-16-7.200-16-16s7.200-16 16-16zm0 64H272c8.800 0 16 7.200 16 16s-7.200 16-16 16H112c-8.800 0-16-7.200-16-16s7.200-16 16-16zm0 64H272c8.800 0 16 7.200 16 16s-7.200 16-16 16H112c-8.800 0-16-7.200-16-16s7.200-16 16-16z"/></svg><span>项目规划纸</span></h3><p>帮助规划和跟踪项目进度的专业模板</p><div class="sp"><div><svg width="15.0" height="12" viewBox="0 0 640 512" fill="#60a5fa"><path d="M0 336c0 26.500 21.500 48 48 48l544 0c26.500 0 48-21.500 48-48l0-160c0-26.500-21.500-48-48-48l-64 0 0 80c0 8.800-7.200 16-16 16s-16-7.200-16-16l0-80-64 0 0 80c0 8.800-7.200 16-16 16s-16-7.200-16-16l0-80-64 0 0 80c0 8.800-7.200 16-16 16s-16-7.200-16-16l0-80-64 0 0 80c0 8.800-7.200 16-16 16s-16-7.200-16-16l0-80-64 0 0 80c0 8.800-7.200 16-16 16s-16-7.200-16-16l0-80-64 0c-26.500 0-48 21.500-48 48L0 336z"/></svg>线条间距<span>: 7mm</span></div><div><svg width="12.0" height="12" viewBox="0 0 512 512" fill="#c084fc"><path d="M368.400 18.300L312.700 74.100 437.900 199.300l55.700-55.700c21.900-21.900 21.900-57.300 0-79.200L447.600 18.300c-21.900-21.900-57.300-21.900-79.200 0zM288 94.600l-9.200 2.800L134.700 140.600c-19.900 6-35.700 21.200-42.300 41L3.800 445.800c-3.800 11.300-1 23.900 7.300 32.400L164.700 324.700c-3-6.300-4.700-13.300-4.700-20.700c0-26.500 21.500-48 48-48s48 21.500 48 48s-21.500 48-48 48c-7.400 0-14.400-1.700-20.700-4.700L33.700 500.900c8.600 8.300 21.100 11.200 32.400 7.300l264.300-88.600c19.700-6.600 35-22.400 41-42.300l43.200-144.100 2.800-9.200L288 94.600z"/></svg>线条粗细<span>: 0.5px</span></div></div></div>
  </div>
</div>

<div id="sb"><div class="up"></div><div class="th"></div><div class="dn"></div></div>
</body>
</html>
